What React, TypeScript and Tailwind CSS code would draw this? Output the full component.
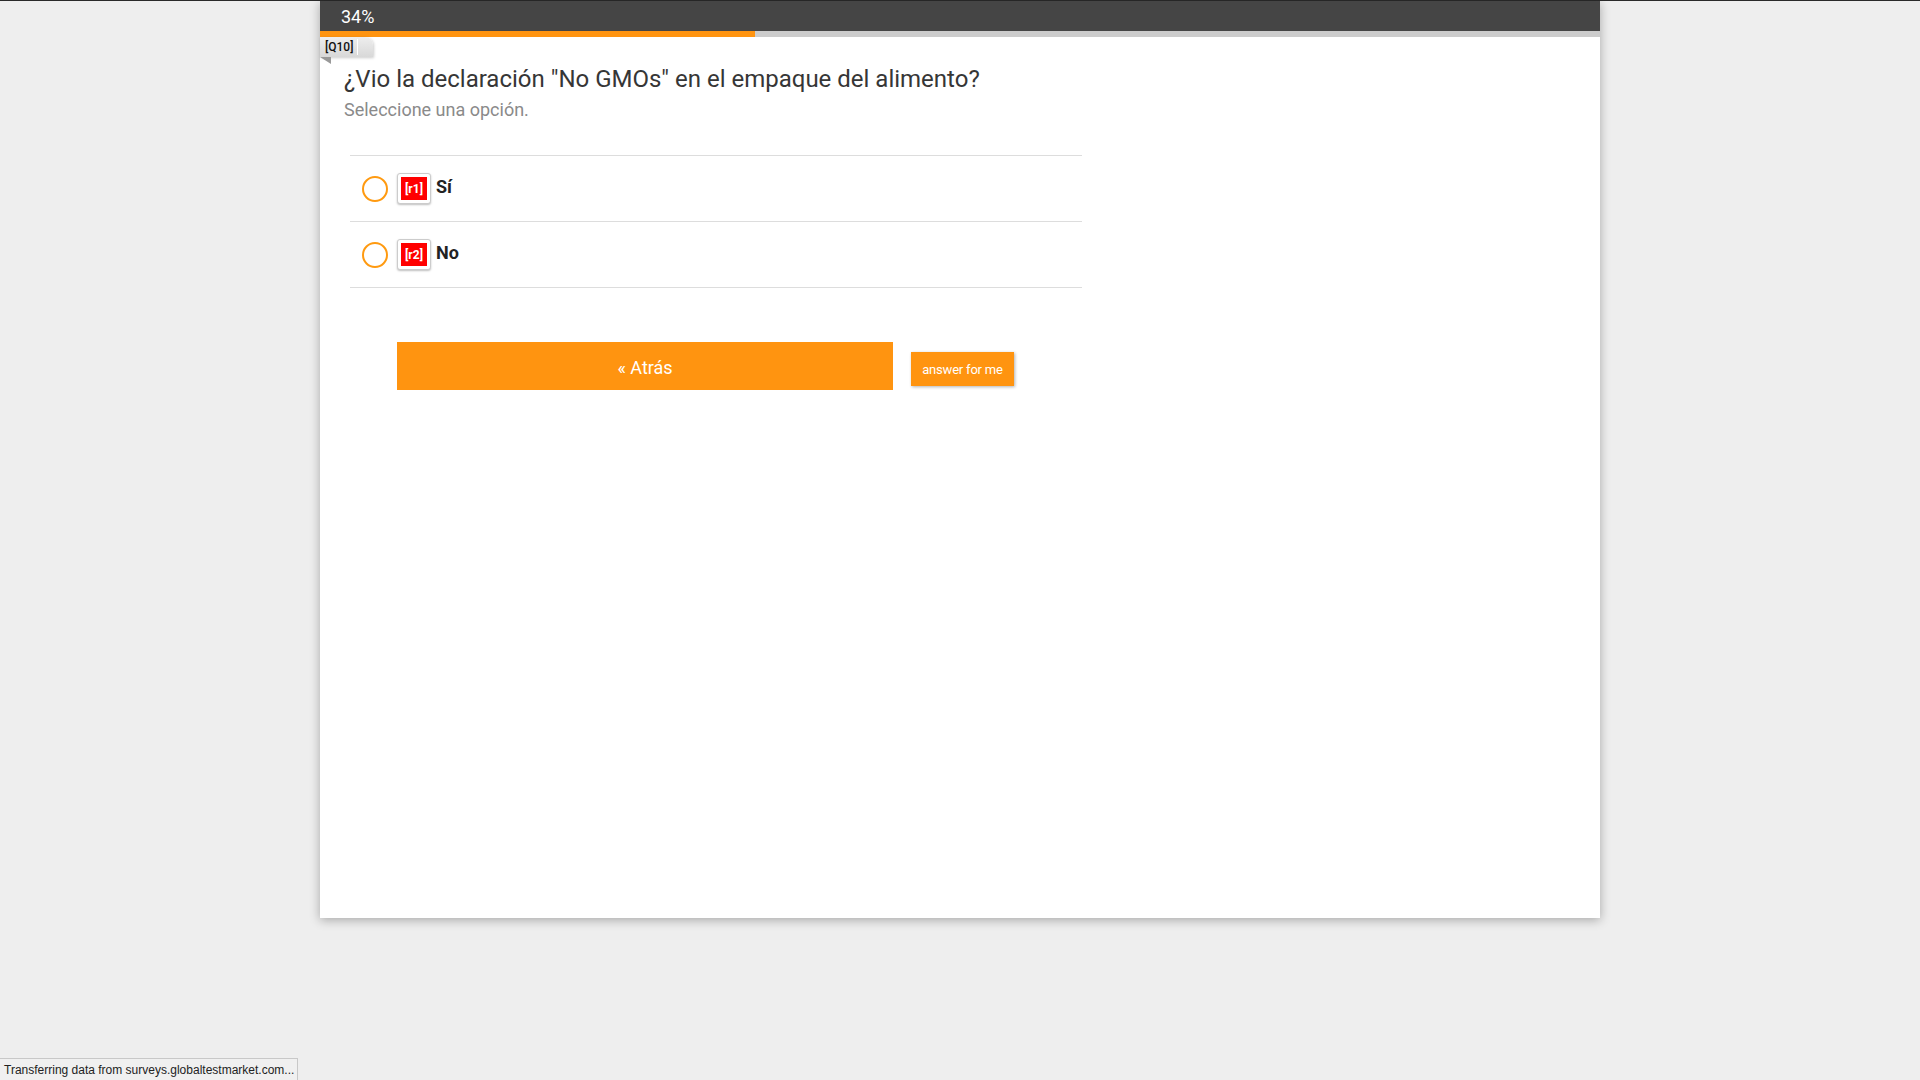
import React from 'react';

const options = [
  { code: 'r1', label: 'Sí' },
  { code: 'r2', label: 'No' },
];

const App: React.FC = () => {
  const progress = 34;

  return (
    <div className="relative h-[1080px] w-full overflow-hidden bg-[#eeeeee] font-['Roboto',sans-serif]">
      {/* browser chrome edge */}
      <div className="h-px w-full bg-[#2a2a2a]"></div>

      {/* SURVEY PANEL */}
      <div className="mx-auto flex h-[917px] w-[1280px] flex-col bg-white shadow-[0_2px_10px_rgba(0,0,0,0.3)]">
        <div className="flex h-[30px] items-center bg-[#454545] pl-[21px] pt-[2px] text-[18px] leading-none text-white">
          {progress}%
        </div>
        <div className="h-[6px] w-full bg-[#cccccc]">
          <div className="h-full bg-[#ff9410]" style={{ width: `${progress}%` }}></div>
        </div>

        {/* question tag */}
        <div className="relative h-[20px] w-[53px] rounded-tr-[8px] bg-gradient-to-b from-[#eeeeee] to-[#d8d8d8] shadow-[1px_1px_3px_rgba(0,0,0,0.2)]">
          <div className="flex h-full items-center">
            <span className="pl-[5px] text-[12px] font-medium leading-none text-[#111]">[Q10]</span>
            <span className="ml-[4px] h-[16px] w-px border-r border-white bg-[#bbbbbb]"></span>
          </div>
          <div className="absolute left-0 top-full h-0 w-0 border-l-[11px] border-t-[7px] border-l-transparent border-t-[#999999]"></div>
        </div>

        <div className="pl-[24px] pt-[8px]">
          <h1 className="text-[24px] leading-[28px] text-[#363636]">¿Vio la declaración "No GMOs" en el empaque del alimento?</h1>
          <p className="mt-[6px] text-[18px] leading-[22px] text-[#8a8a8a]">Seleccione una opción.</p>
        </div>

        <div className="ml-[30px] mt-[34px] w-[732px] border-t border-[#dddddd]">
          {options.map((opt) => (
            <div key={opt.code} className="flex h-[66px] items-start border-b border-[#dddddd] pl-[12px] pt-[17px]">
              <span className="mt-[3px] h-[26px] w-[26px] rounded-full border-2 border-[#ff9a10]"></span>
              <span className="ml-[9px] flex h-[31px] w-[34px] items-center justify-center rounded-[3px] border border-[#cccccc] bg-white shadow-[0_1px_2px_rgba(0,0,0,0.25)]">
                <span className="flex h-[23px] w-[26px] items-center justify-center bg-[#ff0000] text-[12px] font-bold leading-none text-white">
                  [{opt.code}]
                </span>
              </span>
              <span className="ml-[5px] mt-[3px] text-[18px] font-bold leading-[22px] text-[#222]">{opt.label}</span>
            </div>
          ))}
        </div>

        <div className="ml-[77px] mt-[54px] flex items-start gap-[18px]">
          <button className="flex h-[48px] w-[496px] items-center justify-center bg-[#ff9410] pt-[2px] text-[18px] text-white">
            « Atrás
          </button>
          <button className="mt-[10px] flex h-[34px] w-[103px] items-center justify-center bg-[#ff9410] pt-[1px] text-[13px] tracking-[-0.2px] text-white shadow-[1px_1px_3px_rgba(0,0,0,0.3)]">
            answer for me
          </button>
        </div>
      </div>

      {/* browser status bar */}
      <div className="absolute bottom-0 left-0 flex h-[22px] w-[298px] items-center whitespace-nowrap border-r border-t border-[#c8c8c8] bg-[#f0f0f0] pl-[4px] font-['Liberation_Sans',sans-serif] text-[12px] text-[#222]">
        Transferring data from surveys.globaltestmarket.com...
      </div>
    </div>
  );
};

export default App;
